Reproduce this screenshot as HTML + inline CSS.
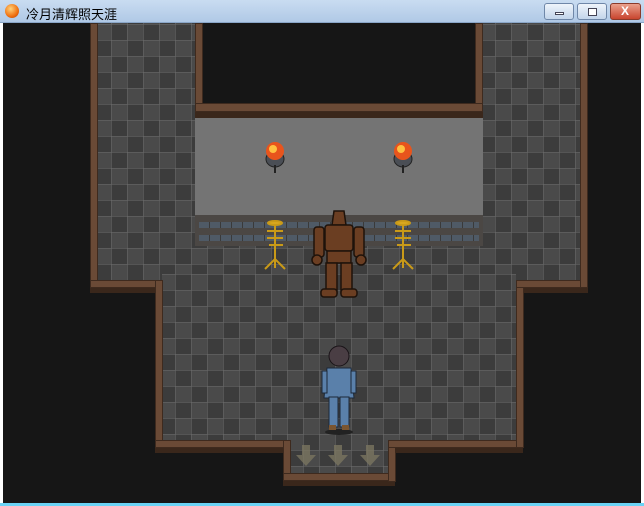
<!DOCTYPE html>
<html><head><meta charset="utf-8"><style>
*{margin:0;padding:0;box-sizing:border-box}
body{width:644px;height:506px;overflow:hidden;background:#fff;position:relative;font-family:"Liberation Sans","Noto Sans CJK SC",sans-serif}
.tb{position:absolute;left:0;top:0;width:644px;height:23px;background:linear-gradient(#c9dcf1,#b0c9e6);border-bottom:1px solid #8aa6c8}
.tb span{position:absolute;left:26px;top:4px;font-size:13px;color:#000}
.ic{position:absolute;left:5px;top:4px;width:14px;height:14px;border-radius:50%;background:radial-gradient(circle at 40% 35%,#ffd27a,#f07010 60%,#b03a00)}
.bt{position:absolute;top:3px;height:17px;border:1px solid #6f87a8;border-radius:3px;background:linear-gradient(#eef4fb,#c3d5ea)}
.game{position:absolute;left:3px;top:23px;width:638px;height:480px;background:#161616;overflow:hidden}
.bot{position:absolute;left:0;top:503px;width:644px;height:3px;background:#6ad3f5}
.fl{position:absolute;background-color:#434343;
background-image:linear-gradient(90deg,rgba(110,110,110,.5) 1px,transparent 1px),linear-gradient(rgba(110,110,110,.5) 1px,transparent 1px),conic-gradient(#3c3c3c 25%,#4a4a4a 0 50%,#3c3c3c 0 75%,#4a4a4a 0);
background-size:16px 16px,16px 16px,32px 32px;background-position:-3px 1px,-3px 1px,-3px 1px}
.w{position:absolute;background:#6a4a36;border:1px solid #3e2a1e}
.wd{position:absolute;background:#3a271b}
</style></head><body>
<div class="tb"><div class="ic"></div><span>冷月清辉照天涯</span>
<div class="bt" style="left:544px;width:30px"><div style="position:absolute;left:10px;top:8px;width:9px;height:3px;background:#fff;border:1px solid #445"></div></div>
<div class="bt" style="left:577px;width:30px"><div style="position:absolute;left:10px;top:4px;width:9px;height:8px;border:1px solid #445;background:#fff"></div></div>
<div class="bt" style="left:610px;width:31px;background:linear-gradient(#eaa08c,#c8452e);border-color:#8a3a2a"><span style="position:absolute;left:10px;top:0;font-size:12px;font-weight:bold;color:#fff">X</span></div>
</div>
<div class="game">
<!-- floors (coords relative: subtract x3,y23) -->
<div class="fl" style="left:95px;top:0;width:482px;height:258px"></div>
<div class="fl" style="left:159px;top:250px;width:354px;height:168px"></div>
<div class="fl" style="left:287px;top:410px;width:98px;height:42px;background-color:#4a4a4a"></div>
<!-- top dark room -->
<div style="position:absolute;left:192px;top:0;width:288px;height:88px;background:#161616"></div>
<div class="w" style="left:192px;top:0;width:8px;height:88px"></div>
<div class="w" style="left:472px;top:0;width:8px;height:88px"></div>
<div class="w" style="left:192px;top:80px;width:288px;height:9px"></div>
<div class="wd" style="left:192px;top:89px;width:288px;height:6px"></div>
<!-- platform -->
<div style="position:absolute;left:192px;top:95px;width:288px;height:97px;background:#747474"></div>
<div style="position:absolute;left:192px;top:192px;width:288px;height:31px;background:#4b4744"></div>
<div style="position:absolute;left:196px;top:199px;width:280px;height:6px;background:repeating-linear-gradient(90deg,#4f5a66 0 10px,#3a3a3a 10px 11px)"></div>
<div style="position:absolute;left:196px;top:212px;width:280px;height:6px;background:repeating-linear-gradient(90deg,#4f5a66 0 10px,#3a3a3a 10px 11px)"></div>
<!-- outer walls -->
<div class="w" style="left:87px;top:0;width:8px;height:265px"></div>
<div class="w" style="left:87px;top:257px;width:72px;height:8px"></div>
<div class="wd" style="left:87px;top:265px;width:65px;height:5px"></div>
<div class="w" style="left:152px;top:257px;width:8px;height:168px"></div>
<div class="w" style="left:152px;top:417px;width:135px;height:8px"></div>
<div class="wd" style="left:152px;top:425px;width:128px;height:5px"></div>
<div class="w" style="left:280px;top:417px;width:8px;height:42px"></div>
<div class="w" style="left:280px;top:450px;width:112px;height:8px"></div>
<div class="wd" style="left:280px;top:458px;width:112px;height:5px"></div>
<div class="w" style="left:385px;top:417px;width:8px;height:42px"></div>
<div class="w" style="left:385px;top:417px;width:135px;height:8px"></div>
<div class="wd" style="left:392px;top:425px;width:128px;height:5px"></div>
<div class="w" style="left:513px;top:257px;width:8px;height:168px"></div>
<div class="w" style="left:513px;top:257px;width:72px;height:8px"></div>
<div class="wd" style="left:521px;top:265px;width:64px;height:5px"></div>
<div class="w" style="left:577px;top:0;width:8px;height:265px"></div>
<!-- sprites -->
<svg style="position:absolute;left:0;top:0" width="638" height="480">
<g id="br"><ellipse cx="272" cy="136" rx="9" ry="8" fill="#4a4e55" stroke="#222"/><circle cx="272" cy="128" r="9" fill="#e8541c"/><circle cx="270" cy="126" r="4" fill="#ffc040"/><line x1="272" y1="142" x2="272" y2="150" stroke="#222" stroke-width="2"/></g>
<use href="#br" x="128"/>
<g id="cd" fill="none" stroke="#c99a18" stroke-width="2"><line x1="272" y1="200" x2="272" y2="245"/><path d="M262 246 L272 236 L282 246"/><path d="M264 215 h16 M266 222 h14 M264 208 h16"/><ellipse cx="272" cy="200" rx="7" ry="2" fill="#d9a820"/></g>
<use href="#cd" x="128"/>
<!-- golem -->
<g fill="#6b3e22" stroke="#1e120a" stroke-width="1.5">
<path d="M331 188 h10 l2 14 h-14z"/>
<rect x="322" y="202" width="28" height="26" rx="3"/>
<rect x="311" y="204" width="10" height="30" rx="3"/><rect x="351" y="204" width="10" height="30" rx="3"/>
<circle cx="314" cy="237" r="5"/><circle cx="358" cy="237" r="5"/>
<rect x="324" y="228" width="24" height="12"/>
<rect x="323" y="240" width="11" height="30"/><rect x="338" y="240" width="11" height="30"/>
<rect x="318" y="266" width="16" height="8" rx="3"/><rect x="338" y="266" width="16" height="8" rx="3"/>
</g>
<!-- player -->
<ellipse cx="336" cy="409" rx="14" ry="3" fill="#222"/>
<circle cx="336" cy="333" r="10" fill="#4a3e44" stroke="#1a1418"/>
<path d="M324 345 h24 l3 30 h-30z" fill="#5a80aa" stroke="#1c2838"/>
<rect x="319" y="348" width="5" height="22" fill="#5a80aa" stroke="#1c2838"/><rect x="348" y="348" width="5" height="22" fill="#5a80aa" stroke="#1c2838"/>
<rect x="326" y="374" width="9" height="30" fill="#5a80aa" stroke="#1c2838"/><rect x="337" y="374" width="9" height="30" fill="#5a80aa" stroke="#1c2838"/>
<rect x="326" y="402" width="7" height="5" fill="#7a5530"/><rect x="339" y="402" width="7" height="5" fill="#7a5530"/>
<!-- arrows -->
<g fill="#7a7560" opacity=".8"><path d="M299 422 h8 v10 h6 l-10 11 l-10 -11 h6z"/><path d="M331 422 h8 v10 h6 l-10 11 l-10 -11 h6z"/><path d="M363 422 h8 v10 h6 l-10 11 l-10 -11 h6z"/></g>
</svg>
</div>
<div style="position:absolute;left:0;top:23px;width:3px;height:480px;background:#fff"></div>
<div style="position:absolute;left:641px;top:23px;width:3px;height:480px;background:#fff"></div>
<div class="bot"></div>
</body></html>
